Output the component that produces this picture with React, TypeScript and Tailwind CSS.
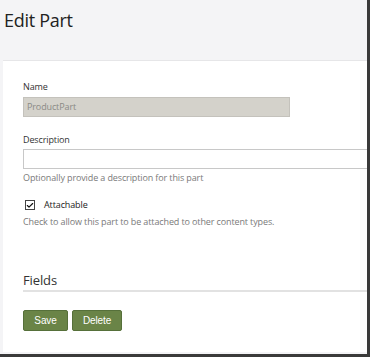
import { Check } from "lucide-react";

const font = { fontFamily: '"Open Sans", "Noto Sans", sans-serif' };

export default function App() {
  return (
    <div className="h-[359px] w-[371px] overflow-hidden bg-white" style={font}>
      <div className="flex h-[357px] w-[370px] flex-col border-r-[3px] border-b-[3px] border-[#3a3a3a] bg-[#f4f4f6]">
        <div className="h-[60px] pl-[4px] pt-[7px] text-[18px] tracking-[-0.3px] text-[#222]">
          Edit Part
        </div>
        <div className="mb-[2px] ml-[3px] flex flex-1 flex-col border-t border-[#e6e6e8] bg-white pl-[20px] pt-[19px] text-[9px] tracking-[-0.12px] text-[#333]">
          <label className="leading-[14px]">Name</label>
          <div className="mt-[3px] flex h-[20px] w-[267px] items-center border border-[#c4c2bc] bg-[#d4d2cb] px-[3px] text-[#8a8a86]">
            ProductPart
          </div>

          <label className="mt-[16px] leading-[14px]">Description</label>
          <div className="mt-[2px] h-[20px] w-full border border-r-0 border-[#c8c8c8] bg-white" />
          <p className="mt-[2px] leading-[14px] text-[#7a7a7a]">
            Optionally provide a description for this part
          </p>

          <div className="mt-[13px] flex items-center gap-[9px] pl-[2px] leading-[14px]">
            <span className="flex h-[10px] w-[10px] items-center justify-center border border-[#444] bg-white">
              <Check size={9} strokeWidth={3.5} className="text-[#111]" />
            </span>
            <span className="text-[#222]">Attachable</span>
          </div>
          <p className="mt-[3px] leading-[14px] text-[#7a7a7a]">
            Check to allow this part to be attached to other content types.
          </p>

          <h2 className="mt-[43px] text-[13px] leading-[16px] text-[#333]">Fields</h2>
          <div className="mt-[2px] h-[2px] w-full bg-[#e2e2e2]" />

          <div className="mt-[18px] flex gap-[4px]" style={{ fontFamily: '"Liberation Sans", Arial, sans-serif' }}>
            <button className="h-[21px] w-[45px] rounded-[2px] border border-[#56703a] bg-[#6a8447] text-[10px] text-white">
              Save
            </button>
            <button className="h-[21px] w-[50px] rounded-[2px] border border-[#56703a] bg-[#6a8447] text-[10px] text-white">
              Delete
            </button>
          </div>
        </div>
      </div>
    </div>
  );
}
